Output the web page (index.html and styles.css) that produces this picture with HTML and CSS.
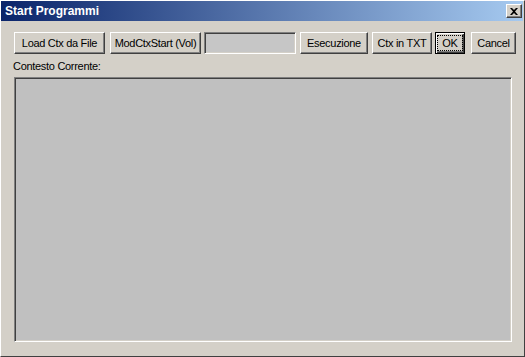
FILE: index.html
```html
<!DOCTYPE html>
<html lang="it">
  <head>
    <meta charset="UTF-8" />
    <title>Start Programmi</title>
    <link rel="stylesheet" href="styles.css">
  </head>

  <body>
    <div class="window">
      <div class="titlebar">
        <span class="title">Start Programmi</span>
        <div class="close-btn">
          <svg width="8" height="7" viewBox="0 0 8 7">
            <path d="M0 0 L2 0 L4 2 L6 0 L8 0 L5 3.5 L8 7 L6 7 L4 5 L2 7 L0 7 L3 3.5 Z" fill="#000" />
          </svg>
        </div>
      </div>

      <div class="content">
        <div class="toolbar">
          <div class="btn btn-load">Load Ctx da File</div>
          <div class="btn btn-mod">ModCtxStart (Vol)</div>
          <div class="field"></div>
          <div class="btn btn-exec">Esecuzione</div>
          <div class="btn btn-txt">Ctx in TXT</div>
          <div class="btn btn-ok"><span class="focus">OK</span></div>
          <div class="btn btn-cancel">Cancel</div>
        </div>

        <div class="label">Contesto Corrente:</div>
        <div class="panel"></div>
      </div>
    </div>
  </body>
</html>
```

FILE: styles.css
```css
* {
  margin: 0;
  padding: 0;
  box-sizing: border-box;
}

body {
  background: #d4d0c8;
  font-family: "Liberation Sans", Arial, sans-serif;
  font-size: 11px;
  color: #000;
}

.window {
  width: 525px;
  height: 357px;
  background: #d4d0c8;
  border: 1px solid;
  border-color: #fff #404040 #404040 #fff;
}

/* title bar */
.titlebar {
  display: flex;
  align-items: center;
  height: 20px;
  margin-right: 1px;
  padding-left: 4px;
  background: linear-gradient(to right, #0a246a, #a6caf0);
}

.title {
  color: #fff;
  font-weight: bold;
  font-size: 12px;
  line-height: 14px;
}

.close-btn {
  display: flex;
  align-items: center;
  justify-content: center;
  width: 16px;
  height: 14px;
  margin-left: auto;
  margin-right: 1px;
  background: #d4d0c8;
  border: 1px solid;
  border-color: #fff #404040 #404040 #fff;
  box-shadow: inset -1px -1px #808080;
}

/* body */
.content {
  padding: 11px 0 0 13px;
}

.toolbar {
  display: flex;
  height: 22px;
}

.btn {
  display: flex;
  align-items: center;
  justify-content: center;
  height: 22px;
  letter-spacing: -0.3px;
  background: #d4d0c8;
  border: 1px solid;
  border-color: #fff #404040 #404040 #fff;
  box-shadow: inset -1px -1px #808080;
  white-space: nowrap;
}

.btn-load {
  width: 91px;
}

.btn-mod {
  width: 91px;
  margin-left: 5px;
}

.field {
  width: 92px;
  height: 22px;
  margin-left: 3px;
  background: #c6c6c6;
  border: 1px solid;
  border-color: #808080 #fff #fff #808080;
  box-shadow: inset 1px 1px #404040, inset -1px -1px #d4d0c8;
}

.btn-exec {
  width: 68px;
  margin-left: 4px;
}

.btn-txt {
  width: 60px;
  margin-left: 4px;
}

.btn-ok {
  width: 30px;
  margin-left: 3px;
  border-color: #000;
  box-shadow: inset 1px 1px #fff, inset -1px -1px #404040, inset -2px -2px #808080;
}

.focus {
  padding: 0 4px;
  line-height: 14px;
  outline: 1px dotted #000;
}

.btn-cancel {
  width: 45px;
  margin-left: 6px;
}

.label {
  margin: 6px 0 0 -1px;
  line-height: 13px;
  letter-spacing: -0.3px;
}

.panel {
  width: 498px;
  height: 265px;
  margin-top: 4px;
  background: #c0c0c0;
  border: 1px solid;
  border-color: #808080 #fff #fff #808080;
  box-shadow: inset 1px 1px #404040, inset -1px -1px #d4d0c8;
}
```
